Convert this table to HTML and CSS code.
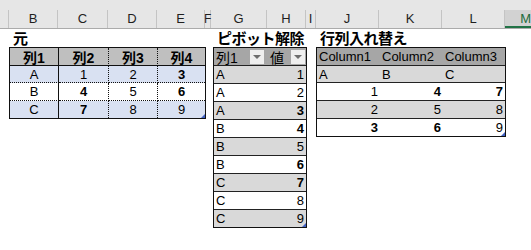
FILE: index.html
```html
<!DOCTYPE html>
<html lang="ja">
<head>
<meta charset="utf-8">
<title>Sheet</title>
<link rel="stylesheet" href="styles.css">
</head>
<body>
<div class="sheet">
  <div class="band"></div>
  <div class="heads">
    <div class="h wa"></div>
    <div class="h wb">B</div>
    <div class="h wc">C</div>
    <div class="h wd">D</div>
    <div class="h we">E</div>
    <div class="h wf">F</div>
    <div class="h wg">G</div>
    <div class="h wh">H</div>
    <div class="h wi">I</div>
    <div class="h wj">J</div>
    <div class="h wk">K</div>
    <div class="h wl">L</div>
    <div class="h wm sel">M</div>
  </div>
  <div class="area">
    <section class="blk blk-src">
      <div class="title">元</div>
      <div class="src">
        <div class="c hd v1">列1</div><div class="c hd v2">列2</div><div class="c hd v2">列3</div><div class="c hd">列4</div>
        <div class="c band1 d v1">A</div><div class="c band1 d v2">1</div><div class="c band1 d v2">2</div><div class="c band1 d b">3</div>
        <div class="c d v1">B</div><div class="c d v2 b">4</div><div class="c d v2">5</div><div class="c d b">6</div>
        <div class="c band1 v1">C</div><div class="c band1 v2 b">7</div><div class="c band1 v2">8</div><div class="c band1 handle">9</div>
      </div>
    </section>
    <section class="blk blk-piv">
      <div class="title">ピボット解除</div>
      <div class="piv">
        <div class="p hd"><span>列1</span><span class="dd"></span></div><div class="p hd"><span>値</span><span class="dd dd2"></span></div>
        <div class="p g">A</div><div class="p g n">1</div>
        <div class="p">A</div><div class="p n">2</div>
        <div class="p g">A</div><div class="p g n b">3</div>
        <div class="p">B</div><div class="p n b">4</div>
        <div class="p g">B</div><div class="p g n">5</div>
        <div class="p">B</div><div class="p n b">6</div>
        <div class="p g">C</div><div class="p g n b">7</div>
        <div class="p">C</div><div class="p n">8</div>
        <div class="p g last">C</div><div class="p g n last handle">9</div>
      </div>
    </section>
    <section class="blk blk-tr">
      <div class="title">行列入れ替え</div>
      <div class="tr">
        <div class="t hd">Column1</div><div class="t hd">Column2</div><div class="t hd">Column3</div>
        <div class="t g">A</div><div class="t g">B</div><div class="t g">C</div>
        <div class="t n">1</div><div class="t n b">4</div><div class="t n b">7</div>
        <div class="t g n">2</div><div class="t g n">5</div><div class="t g n">8</div>
        <div class="t n b last">3</div><div class="t n b last">6</div><div class="t n last handle">9</div>
      </div>
    </section>
  </div>
</div>
</body>
</html>
```
FILE: styles.css
```css
* { box-sizing: border-box; }
html, body { margin: 0; padding: 0; background: #ffffff; }
.sheet {
  width: 531px;
  height: 250px;
  overflow: hidden;
  font-family: "Liberation Sans", "Noto Sans CJK JP", sans-serif;
  color: #000;
}
.band { height: 10px; background: #e6e6e6; }
.heads {
  display: flex;
  height: 19px;
  background: #e6e6e6;
  border-bottom: 1px solid #ababab;
}
.h {
  flex: none;
  height: 18px;
  border-right: 1px solid #c4c4c4;
  font-size: 13px;
  line-height: 18px;
  text-align: center;
  color: #1f1f1f;
}
.wa { width: 9px; }
.wb { width: 49px; }
.wc { width: 50px; }
.wd { width: 49px; }
.we { width: 48px; }
.wf { width: 6px; font-size: 12px; text-align: left; overflow: visible; white-space: nowrap; text-indent: -1px; }
.wg { width: 56px; }
.wh { width: 39px; }
.wi { width: 10px; }
.wj { width: 63px; }
.wk { width: 63px; }
.wl { width: 63px; }
.wm { width: 26px; border-right: none; }
.sel {
  background: #d2d2d2;
  color: #1d6b3b;
  height: 18px;
  border-bottom: 2px solid #217346;
  text-align: right;
  padding-right: 0;
  white-space: nowrap;
}

.area {
  display: flex;
  align-items: flex-start;
  padding-left: 9px;
}
.blk { flex: none; }
.blk-src { width: 197px; }
.blk-piv { width: 94px; margin-left: 7px; }
.blk-tr { width: 190px; margin-left: 9px; }
.title {
  height: 18px;
  font-family: "Noto Sans CJK JP", sans-serif;
  font-weight: 700;
  font-size: 15px;
  line-height: 18px;
  padding-left: 4px;
  white-space: nowrap;
  letter-spacing: -0.5px;
}

/* source table */
.src {
  display: grid;
  grid-template-columns: 49px 50px 49px 47px;
  grid-template-rows: 18px 17px 18px 17px;
  border: 1px solid #111;
}
.c {
  font-size: 13px;
  text-align: center;
  display: flex;
  align-items: center;
  justify-content: center;
  position: relative;
}
.c.hd {
  background: #bfbfbf;
  font-weight: 700;
  font-size: 14px;
  border-bottom: 1px solid #111;
}
.band1 { background: #d9e1f2; }
.d { border-bottom: 1px dotted #111; }
.v1 { border-right: 1px solid #111; }
.v2 { border-right: 1px dotted #111; }
.b { font-weight: 700; }

/* pivot table */
.piv {
  display: grid;
  grid-template-columns: 54px 38px;
  grid-template-rows: 18px repeat(8, 18px) 17px;
  border: 1px solid #111;
}
.p {
  font-size: 13px;
  display: flex;
  align-items: center;
  padding: 0 2px;
  border-bottom: 1px solid #222;
  position: relative;
  background: #ffffff;
}
.p.hd {
  background: #a6a6a6;
  justify-content: space-between;
  padding: 0 4px 0 2px;
  font-size: 14px;
}
.p.hd + .p.hd { padding: 0 1px 0 2px; }
.p.g, .t.g { background: #d9d9d9; }
.p.n, .t.n { justify-content: flex-end; }
.p.last, .t.last { border-bottom: none; }
.dd {
  width: 14px;
  height: 14px;
  background: #efefef;
  display: flex;
  align-items: center;
  justify-content: center;
}
.dd::after {
  content: "";
  width: 0;
  height: 0;
  border-left: 4px solid transparent;
  border-right: 4px solid transparent;
  border-top: 4px solid #6e6e6e;
}

/* transpose table */
.tr {
  display: grid;
  grid-template-columns: 63px 63px 62px;
  grid-template-rows: 18px 17px 18px 18px 17px;
  border: 1px solid #111;
}
.t {
  font-size: 13px;
  display: flex;
  align-items: center;
  padding: 0 2px;
  border-bottom: 1px solid #222;
  position: relative;
  background: #ffffff;
  white-space: nowrap;
}
.t.hd { background: #a6a6a6; }

.handle::after {
  content: "";
  position: absolute;
  right: 0;
  bottom: 0;
  width: 0;
  height: 0;
  border-left: 4px solid transparent;
  border-bottom: 4px solid #3f5fbf;
}
```
